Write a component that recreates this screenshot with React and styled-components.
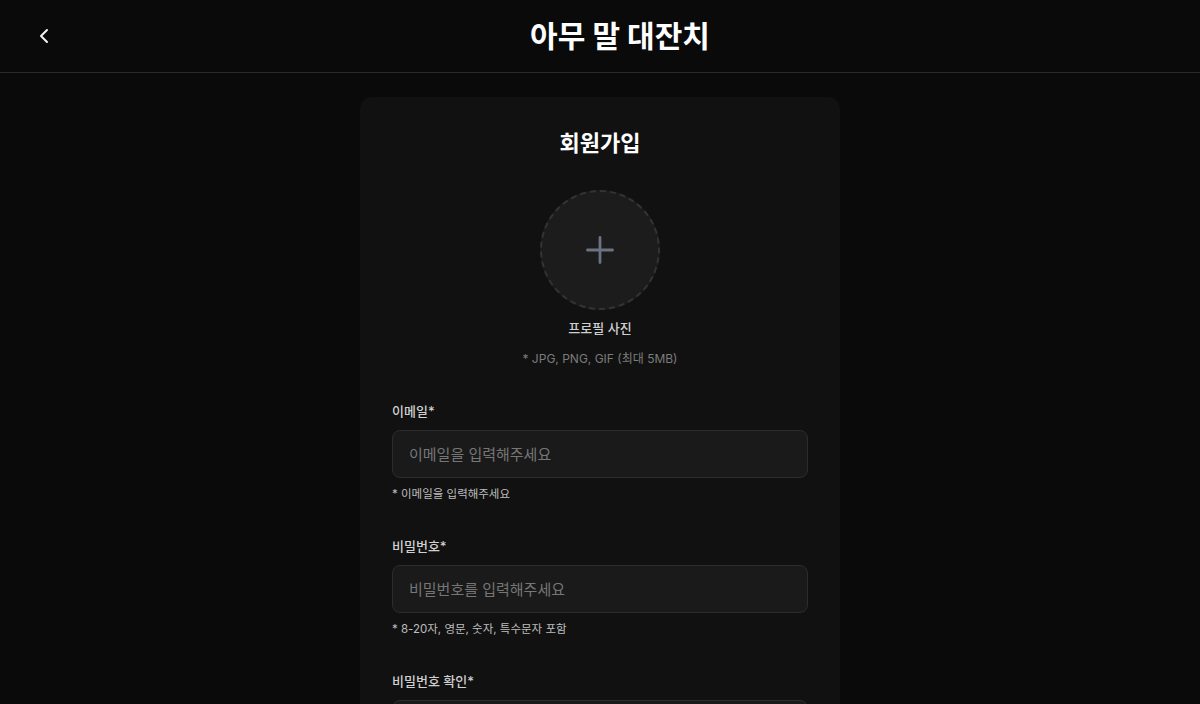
import React from 'react';
import styled, { createGlobalStyle } from 'styled-components';
import { ChevronLeft } from 'lucide-react';

const GlobalStyle = createGlobalStyle`
	html, body {
		margin: 0;
		padding: 0;
		background: #0a0a0a;
		overflow: hidden;
	}
	body {
		font-family: 'Inter', 'Noto Sans CJK KR', sans-serif;
		color: #fff;
	}
	* {
		box-sizing: border-box;
	}
`;

const Page = styled.div`
	min-height: 100vh;
	background: #0a0a0a;
`;

const Header = styled.header`
	display: flex;
	align-items: center;
	height: 73px;
	padding: 0 24px;
	border-bottom: 1px solid #2a2a2a;
`;

const BackButton = styled.button`
	display: flex;
	align-items: center;
	justify-content: center;
	width: 40px;
	height: 40px;
	padding: 0;
	border: none;
	background: none;
	color: #f2f2f2;
	cursor: pointer;
`;

const SiteTitle = styled.h1`
	flex: 1;
	margin: 0;
	text-align: center;
	font-size: 30px;
	font-weight: 700;
	line-height: 1;
	color: #fff;
`;

const Main = styled.main`
	display: flex;
	justify-content: center;
	padding-top: 24px;
`;

const Card = styled.section`
	width: 480px;
	padding: 32px;
	background: #111111;
	border-radius: 12px;
`;

const CardTitle = styled.h2`
	margin: 0 0 32px;
	text-align: center;
	font-size: 22px;
	font-weight: 700;
	line-height: 29px;
	color: #fff;
`;

const Profile = styled.div`
	display: flex;
	flex-direction: column;
	align-items: center;
	margin-bottom: 33px;
`;

const Avatar = styled.button`
	display: flex;
	align-items: center;
	justify-content: center;
	width: 120px;
	height: 120px;
	padding: 0;
	border-radius: 50%;
	border: 2px dashed #333335;
	background: #1c1c1d;
	cursor: pointer;
`;

const ProfileLabel = styled.p`
	margin: 8px 0 0;
	font-size: 13px;
	font-weight: 500;
	line-height: 20px;
	color: #cfcfcf;
`;

const ProfileHint = styled.p`
	margin: 12px 0 0;
	font-size: 12px;
	line-height: 18px;
	color: #7c7c7c;
`;

const Field = styled.div`
	display: flex;
	flex-direction: column;
	& + & {
		margin-top: 34px;
	}
`;

const Label = styled.label`
	margin-bottom: 9px;
	font-size: 13px;
	font-weight: 500;
	line-height: 20px;
	color: #d0d0d0;
`;

const Input = styled.input`
	height: 48px;
	padding: 0 16px;
	border: 1px solid #2c2c2e;
	border-radius: 8px;
	background: #1a1a1a;
	font-family: inherit;
	font-size: 15px;
	color: #fff;
	outline: none;
	&::placeholder {
		color: #767676;
	}
`;

const Helper = styled.p`
	margin: 8px 0 0;
	font-size: 11.5px;
	line-height: 16px;
	color: #bdbdbd;
`;

const PlusIcon = () => (
	<svg width="28" height="28" viewBox="0 0 28 28" fill="none">
		<path
			d="M14 1.5v25M1.5 14h25"
			stroke="#6b7280"
			strokeWidth="2.8"
			strokeLinecap="round"
		/>
	</svg>
);

const fields = [
	{ id: 'email', label: '이메일*', type: 'email', placeholder: '이메일을 입력해주세요', helper: '* 이메일을 입력해주세요' },
	{ id: 'password', label: '비밀번호*', type: 'password', placeholder: '비밀번호를 입력해주세요', helper: '* 8-20자, 영문, 숫자, 특수문자 포함' },
	{ id: 'passwordCheck', label: '비밀번호 확인*', type: 'password', placeholder: '비밀번호를 한번 더 입력해주세요', helper: '* 비밀번호를 한번 더 입력해주세요' },
	{ id: 'nickname', label: '닉네임*', type: 'text', placeholder: '닉네임을 입력해주세요', helper: '* 닉네임을 입력해주세요' },
];

export default () => {
	const fieldJSX = fields.map(f => (
		<Field key={f.id}>
			<Label htmlFor={f.id}>{f.label}</Label>
			<Input id={f.id} type={f.type} placeholder={f.placeholder} />
			<Helper>{f.helper}</Helper>
		</Field>
	));
	return (
		<Page>
			<GlobalStyle />
			<Header>
				<BackButton aria-label="뒤로가기">
					<ChevronLeft size={24} strokeWidth={2} />
				</BackButton>
				<SiteTitle>아무 말 대잔치</SiteTitle>
			</Header>
			<Main>
				<Card>
					<CardTitle>회원가입</CardTitle>
					<Profile>
						<Avatar aria-label="프로필 사진 추가">
							<PlusIcon />
						</Avatar>
						<ProfileLabel>프로필 사진</ProfileLabel>
						<ProfileHint>* JPG, PNG, GIF (최대 5MB)</ProfileHint>
					</Profile>
					{fieldJSX}
				</Card>
			</Main>
		</Page>
	);
};
